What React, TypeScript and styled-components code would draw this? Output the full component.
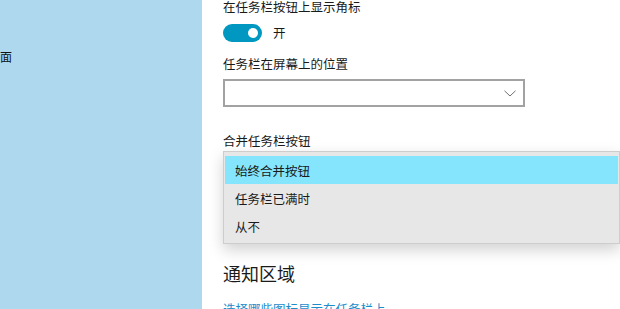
import React from "react";
import styled, { createGlobalStyle } from "styled-components";

const Global = createGlobalStyle`
  html, body { margin: 0; padding: 0; background: #ffffff; }
  body { width: 620px; height: 309px; overflow: hidden; font-family: "Noto Sans CJK SC", "Noto Sans", sans-serif; color: #1a1a1a; }
  #root { width: 620px; height: 309px; }
`;

const Page = styled.div`
  display: flex;
  width: 620px;
  height: 309px;
  overflow: hidden;
`;

const Sidebar = styled.nav`
  width: 202px;
  flex: none;
  background: #aed8ed;
  padding-top: 50px;
  box-sizing: border-box;
  overflow: hidden;
`;

const NavItem = styled.div`
  font-size: 12px;
  line-height: 14px;
  margin-left: -36px;
  white-space: nowrap;
  color: #111;
`;

const Main = styled.main`
  flex: 1;
  padding-left: 21px;
  display: flex;
  flex-direction: column;
  min-width: 0;
  & > * {
    flex: none;
  }
`;

const Label = styled.div<{ $mt?: number }>`
  font-size: 12.5px;
  line-height: 14px;
  margin-top: ${(p) => p.$mt ?? 0}px;
  white-space: nowrap;
`;

const ToggleRow = styled.div`
  display: flex;
  align-items: center;
  gap: 11px;
  margin-top: 10px;
  height: 18px;
`;

const Toggle = styled.div`
  width: 39px;
  height: 18px;
  border-radius: 9px;
  background: #0097c0;
  display: flex;
  align-items: center;
  justify-content: flex-end;
  padding-right: 4px;
  box-sizing: border-box;
`;

const Knob = styled.span`
  width: 10px;
  height: 10px;
  border-radius: 50%;
  background: #ffffff;
`;

const ToggleText = styled.span`
  font-size: 12.5px;
  line-height: 14px;
`;

const Select = styled.div`
  margin-top: 8px;
  width: 302px;
  height: 28px;
  box-sizing: border-box;
  border: 2px solid #a2a2a2;
  background: #fff;
  display: flex;
  align-items: center;
  justify-content: flex-end;
  padding-right: 7px;
`;

const Menu = styled.div`
  margin-top: 3px;
  width: 397px;
  box-sizing: border-box;
  border: 1px solid #cdcdcd;
  background: #e7e7e7;
  padding: 4px 1px 3px 1px;
  box-shadow: 0 6px 14px rgba(0, 0, 0, 0.18);
  display: flex;
  flex-direction: column;
`;

const MenuItem = styled.div<{ $active?: boolean }>`
  height: 28px;
  flex: none;
  display: flex;
  align-items: center;
  padding-left: 10px;
  font-size: 12.5px;
  background: ${(p) => (p.$active ? "#84e5fc" : "transparent")};
  color: #1a1a1a;
  white-space: nowrap;
`;

const Heading = styled.div`
  margin-top: 17px;
  font-size: 18px;
  line-height: 24px;
  color: #1a1a1a;
  white-space: nowrap;
`;

const Link = styled.div`
  margin-top: 17px;
  font-size: 12.5px;
  line-height: 14px;
  color: #1b8ccc;
  white-space: nowrap;
`;

const Chevron = () => (
  <svg width="12" height="7" viewBox="0 0 12 7">
    <path d="M0.5 0.8 L6 6 L11.5 0.8" fill="none" stroke="#707070" strokeWidth="1" />
  </svg>
);

export default function App() {
  return (
    <>
      <Global />
      <Page>
        <Sidebar>
          <NavItem>锁屏界面</NavItem>
        </Sidebar>
        <Main>
          <Label>在任务栏按钮上显示角标</Label>
          <ToggleRow>
            <Toggle>
              <Knob />
            </Toggle>
            <ToggleText>开</ToggleText>
          </ToggleRow>
          <Label $mt={15}>任务栏在屏幕上的位置</Label>
          <Select>
            <Chevron />
          </Select>
          <Label $mt={27}>合并任务栏按钮</Label>
          <Menu>
            <MenuItem $active>始终合并按钮</MenuItem>
            <MenuItem>任务栏已满时</MenuItem>
            <MenuItem>从不</MenuItem>
          </Menu>
          <Heading>通知区域</Heading>
          <Link>选择哪些图标显示在任务栏上</Link>
        </Main>
      </Page>
    </>
  );
}
